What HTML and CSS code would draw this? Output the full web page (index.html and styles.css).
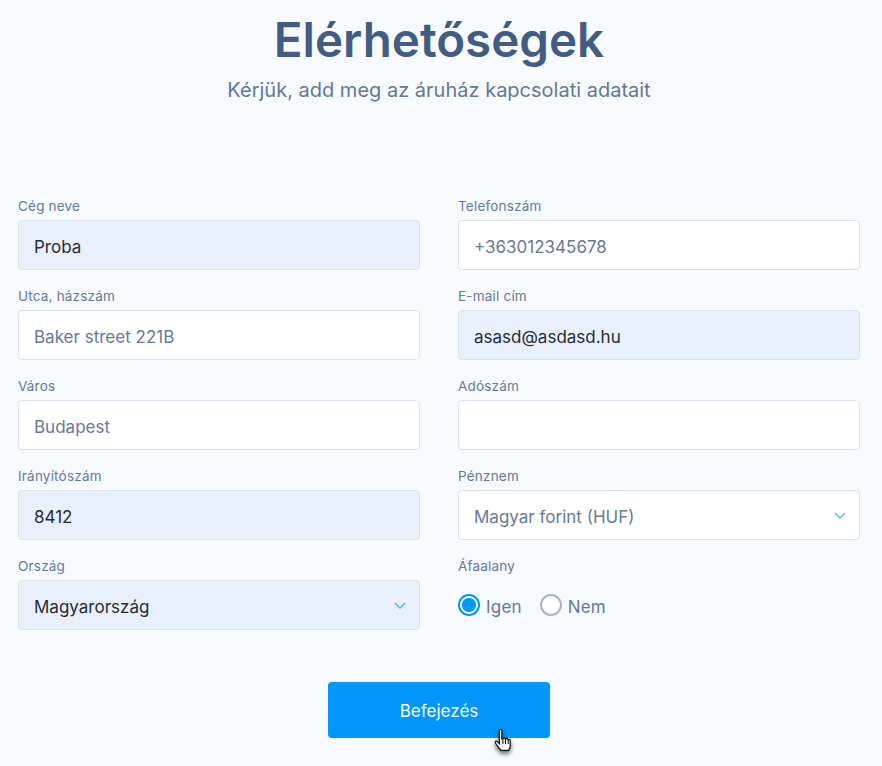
FILE: index.html
```html
<!DOCTYPE html>
<html lang="hu">
<head>
<meta charset="utf-8">
<title>Elérhetőségek</title>
<link rel="stylesheet" href="styles.css">
</head>
<body>
<main class="page">
  <header class="head">
    <h1 class="title">Elérhetőségek</h1>
    <p class="subtitle">Kérjük, add meg az áruház kapcsolati adatait</p>
  </header>
  <form class="grid">
    <div class="field"><label class="label">Cég neve</label><div class="input filled">Proba</div></div>
    <div class="field"><label class="label">Telefonszám</label><div class="input">+363012345678</div></div>
    <div class="field"><label class="label">Utca, házszám</label><div class="input">Baker street 221B</div></div>
    <div class="field"><label class="label">E-mail cím</label><div class="input filled">asasd@asdasd.hu</div></div>
    <div class="field"><label class="label">Város</label><div class="input">Budapest</div></div>
    <div class="field"><label class="label">Adószám</label><div class="input"></div></div>
    <div class="field"><label class="label">Irányítószám</label><div class="input filled">8412</div></div>
    <div class="field"><label class="label">Pénznem</label><div class="input select">Magyar forint (HUF)<svg class="chev" viewBox="0 0 12 7"><path d="M1 1l5 5 5-5"/></svg></div></div>
    <div class="field"><label class="label">Ország</label><div class="input filled select">Magyarország<svg class="chev" viewBox="0 0 12 7"><path d="M1 1l5 5 5-5"/></svg></div></div>
    <div class="field"><label class="label">Áfaalany</label>
      <div class="radios">
        <span class="radio on"></span><span class="radio-text">Igen</span>
        <span class="radio"></span><span class="radio-text">Nem</span>
      </div>
    </div>
  </form>
  <div class="actions">
    <div class="btn-wrap">
      <button class="btn" type="button">Befejezés</button>
      <svg class="cursor" viewBox="0 0 20 26"><path d="M6 2.500c0-1.600 2.400-1.600 2.400 0v8l1 .1c.1-1.500 2.200-1.400 2.300 0l.3.3c.3-1.300 2.100-1.100 2.200.2l.3.4c.4-.9 2-.6 2 .7v4.800c0 2-1 3.200-1.500 4.500H7.500C6 19.500 3.500 17 2.200 14.500c-.7-1.500 1-2.500 2-1.400L6 15z"/><path class="ln" d="M9.400 11v4.500M11.900 11v4.500M14.500 12v3.500"/></svg>
    </div>
  </div>
</main>
</body>
</html>
```
FILE: styles.css
```css
* { box-sizing: border-box; }
html, body { margin: 0; padding: 0; }
body { background: #f7faff; font-family: "Inter", "Liberation Sans", sans-serif; color: #5a6f92; }
.page { width: 882px; height: 766px; overflow: hidden; }
.head { text-align: center; padding-top: 11px; padding-right: 4px; }
.title { margin: 0; font-size: 47.500px; line-height: 58px; font-weight: 600; color: #435c84; }
.subtitle { margin: 6px 0 0; font-size: 20px; line-height: 30px; color: #647898; }
.grid { display: grid; grid-template-columns: 402px 402px; column-gap: 38px; row-gap: 20px; padding: 95px 22px 0 18px; }
.label { display: block; font-size: 13.500px; letter-spacing: .2px; line-height: 12px; height: 20px; color: #66799a; }
.input { height: 50px; display: flex; align-items: center; justify-content: space-between; padding: 3px 15px 0; background: #fff; border: 1px solid #dbe2ee; border-radius: 4px; font-size: 17px; color: #66799a; }
.filled { background: #e8f0fc; color: #262b36; }
.chev { width: 12px; height: 7px; fill: none; stroke: #59b4f5; stroke-width: 1.500; margin-right: -2px; margin-top: -3px; }
.radios { display: flex; align-items: center; height: 50px; }
.radio { width: 22px; height: 22px; border-radius: 50%; border: 2px solid #a7b3c7; background: #fff; margin-right: 6px; }
.radio.on { border-color: #0096fa; background: radial-gradient(circle, #0096fa 0 6.500px, #fff 7.500px); margin-right: 6px; }
.radio-text { font-size: 17px; letter-spacing: .2px; color: #66799a; margin-right: 18px; padding-top: 3px; }
.actions { display: flex; justify-content: center; padding: 52px 4px 0 0; }
.btn-wrap { position: relative; }
.btn { width: 222px; height: 56px; border: 0; padding: 2px 0 0; border-radius: 4px; background: #0096fa; color: #fff; font: 400 17px "Inter", "Liberation Sans", sans-serif; }
.cursor { position: absolute; left: 165px; top: 46px; width: 21px; height: 27px; fill: #fff; stroke: #111; stroke-width: 1.200; filter: drop-shadow(0 3px 2px rgba(0,0,0,.55)); }
.ln { fill: none; stroke-width: 1; }
```
